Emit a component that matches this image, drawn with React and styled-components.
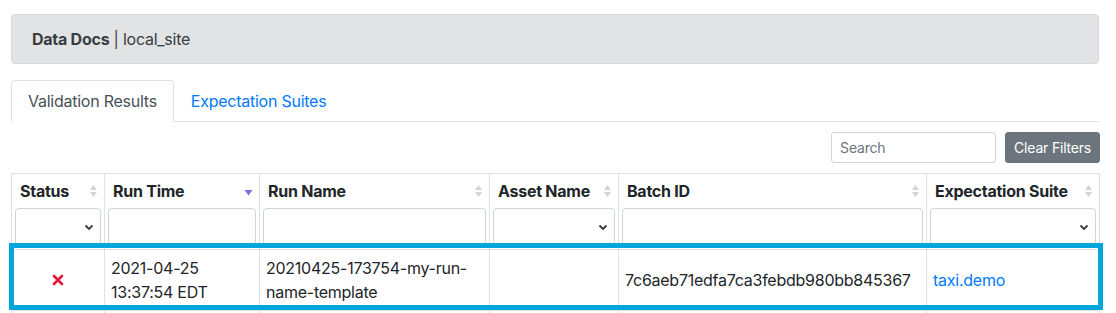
import styled, { createGlobalStyle } from 'styled-components';

const GlobalStyle = createGlobalStyle`
  body {
    margin: 0;
    background: #fff;
    font-family: Inter, "Noto Sans", "Liberation Sans", sans-serif;
    font-size: 16px;
    line-height: 1.5;
    letter-spacing: -0.25px;
    color: #212529;
  }
  * { box-sizing: border-box; }
`;

const columns = [
  { title: 'Status', width: 93, filter: 'select', sort: 'none' },
  { title: 'Run Time', width: 155, filter: 'input', sort: 'desc' },
  { title: 'Run Name', width: 230, filter: 'input', sort: 'none' },
  { title: 'Asset Name', width: 129, filter: 'select', sort: 'none' },
  { title: 'Batch ID', width: 308, filter: 'input', sort: 'none' },
  { title: 'Expectation Suite', width: 173, filter: 'select', sort: 'none' },
];

const SortIcon = ({ sort }) =>
  sort === 'desc' ? (
    <svg width="9" height="14" viewBox="0 0 9 14">
      <path d="M0.5 6 L8.5 6 L4.5 11.5 Z" fill="#7b6fe0" />
    </svg>
  ) : (
    <svg width="9" height="14" viewBox="0 0 9 14">
      <path d="M1 6 L8 6 L4.5 1 Z" fill="#d4d4d4" />
      <path d="M1 8 L8 8 L4.5 13 Z" fill="#d4d4d4" />
    </svg>
  );

const Chevron = () => (
  <svg width="10" height="7" viewBox="0 0 10 7">
    <path d="M1.5 1.5 L5 5 L8.5 1.5" fill="none" stroke="#343a40" strokeWidth="1.8" />
  </svg>
);

const FailIcon = () => (
  <svg width="12" height="12" viewBox="0 0 12 12">
    <path d="M2 2 L10 10 M10 2 L2 10" stroke="#e6183c" strokeWidth="2.6" strokeLinecap="round" />
  </svg>
);

export default function App() {
  return (
    <Page>
      <GlobalStyle />
      <SiteBar>
        <strong>Data Docs</strong> | local_site
      </SiteBar>
      <Tabs>
        <Tab $active>Validation Results</Tab>
        <Tab>Expectation Suites</Tab>
      </Tabs>
      <Toolbar>
        <SearchInput placeholder="Search" />
        <ClearButton>Clear Filters</ClearButton>
      </Toolbar>
      <TableWrap>
        <Table>
          <colgroup>
            {columns.map(c => (
              <col key={c.title} style={{ width: c.width }} />
            ))}
          </colgroup>
          <thead>
            <tr>
              {columns.map(c => (
                <Th key={c.title}>
                  <HeadLine>
                    <span>{c.title}</span>
                    <SortIcon sort={c.sort} />
                  </HeadLine>
                  {c.filter === 'select' ? (
                    <SelectBox>
                      <Chevron />
                    </SelectBox>
                  ) : (
                    <FilterInput />
                  )}
                </Th>
              ))}
            </tr>
          </thead>
          <tbody>
            <tr>
              <Td $center>
                <FailIcon />
              </Td>
              <Td>
                2021-04-25
                <br />
                13:37:54 EDT
              </Td>
              <Td>20210425-173754-my-run-name-template</Td>
              <Td></Td>
              <Td>7c6aeb71edfa7ca3febdb980bb845367</Td>
              <Td>
                <Link>taxi.demo</Link>
              </Td>
            </tr>
            <tr>
              <Td />
              <Td />
              <Td />
              <Td />
              <Td />
              <Td />
            </tr>
          </tbody>
        </Table>
        <Highlight />
      </TableWrap>
    </Page>
  );
}

const Page = styled.div`
  padding: 14px 17px 0 11px;
  height: 313px;
  overflow: hidden;
`;

const SiteBar = styled.div`
  height: 50px;
  padding: 12px 20px;
  background: #e2e3e5;
  border: 1px solid #d6d8db;
  border-radius: 4px;
  color: #383d41;
  margin-bottom: 16px;

  & strong {
    font-weight: 700;
  }
`;

const Tabs = styled.div`
  display: flex;
  border-bottom: 1px solid #dee2e6;
`;

const Tab = styled.div`
  padding: 8px 16px;
  margin-bottom: -1px;
  border: 1px solid ${p => (p.$active ? '#dee2e6' : 'transparent')};
  border-bottom-color: ${p => (p.$active ? '#fff' : 'transparent')};
  border-radius: 4px 4px 0 0;
  background: ${p => (p.$active ? '#fff' : 'transparent')};
  color: ${p => (p.$active ? '#495057' : '#007bff')};
`;

const Toolbar = styled.div`
  display: flex;
  justify-content: flex-end;
  gap: 9px;
  margin: 10px -1px 10px 0;
`;

const SearchInput = styled.input`
  width: 165px;
  height: 31px;
  padding: 4px 8px;
  font-family: inherit;
  font-size: 14px;
  letter-spacing: -0.2px;
  color: #495057;
  border: 1px solid #ced4da;
  border-radius: 3px;
  outline: none;

  &::placeholder {
    color: #6c757d;
  }
`;

const ClearButton = styled.button`
  height: 31px;
  padding: 4px 8px;
  font-family: inherit;
  font-size: 14px;
  letter-spacing: -0.2px;
  color: #fff;
  background: #6c757d;
  border: 1px solid #6c757d;
  border-radius: 3px;
`;

const TableWrap = styled.div`
  position: relative;
`;

const Table = styled.table`
  width: 1088px;
  table-layout: fixed;
  border-collapse: collapse;
  border: 1px solid #dee2e6;
`;

const Th = styled.th`
  padding: 5px 3px 3px;
  border: 1px solid #dee2e6;
  text-align: left;
  vertical-align: top;
  font-weight: 700;
`;

const HeadLine = styled.div`
  display: flex;
  justify-content: space-between;
  align-items: center;
  padding: 0 3px 0 5px;
  height: 24px;
  margin-bottom: 5px;
  white-space: nowrap;
`;

const filterBox = `
  display: flex;
  width: 100%;
  height: 38px;
  border: 1px solid #ced4da;
  border-radius: 4px;
  background: #fff;
`;

const SelectBox = styled.div`
  ${filterBox}
  justify-content: flex-end;
  align-items: center;
  padding-right: 6px;
`;

const FilterInput = styled.input`
  ${filterBox}
  outline: none;
`;

const Td = styled.td`
  padding: 6px 6px;
  height: 60px;
  border: 1px solid #dee2e6;
  vertical-align: middle;
  text-align: ${p => (p.$center ? 'center' : 'left')};
  word-break: break-word;
`;

const Link = styled.span`
  color: #007bff;
`;

const Highlight = styled.div`
  position: absolute;
  top: 70px;
  left: -2px;
  width: 1094px;
  height: 67px;
  border: 5px solid #00a6dc;
  pointer-events: none;
`;
